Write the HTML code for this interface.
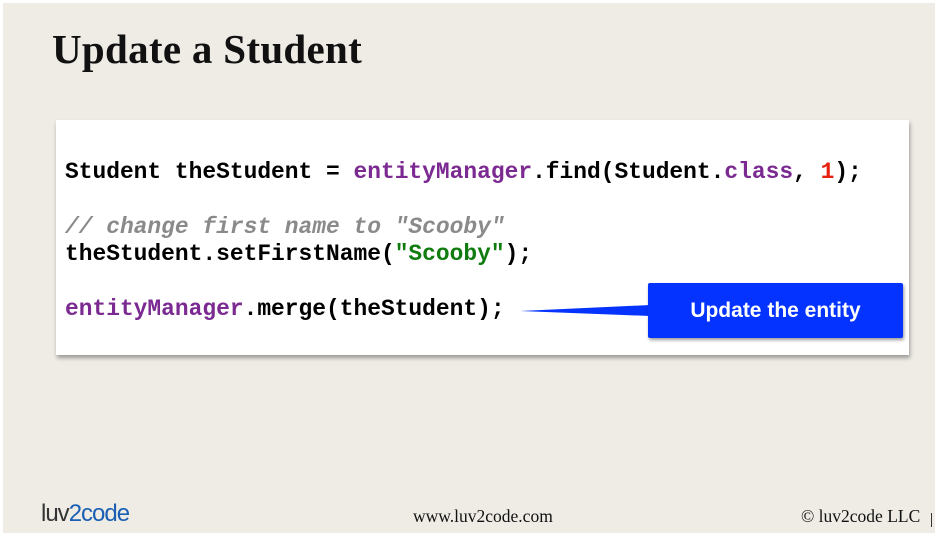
<!DOCTYPE html>
<html><head><style>
html,body{margin:0;padding:0;width:940px;height:538px;background:#fff;overflow:hidden;position:relative}
.bg{position:absolute;left:3px;top:3px;width:932px;height:530px;background:#efece6}
.title{position:absolute;left:52px;top:25px;font:bold 41px "Liberation Serif",serif;color:#111;letter-spacing:0.3px;white-space:nowrap}
.box{position:absolute;left:56px;top:120px;width:853px;height:235px;background:#fff;box-shadow:1px 3px 4px rgba(0,0,0,.35)}
.code{position:absolute;left:65px;font:bold 22.9px "Liberation Mono",monospace;color:#000;white-space:pre}
.p{color:#7b2a91}.c{color:#8a8a8a;font-style:italic}.g{color:#107c10}.r{color:#e8200f}.b{color:#7b2a91}
.call{position:absolute;left:648px;top:283px;width:255px;height:55px;background:#0433ff;border-radius:2px;box-shadow:1px 2px 3px rgba(0,0,0,.4);color:#fff;font:bold 21px "Liberation Sans",sans-serif;text-align:center;line-height:55px}
.foot{position:absolute;top:506px;font:17.5px "Liberation Serif",serif;color:#111}
</style></head><body>
<div class="bg"></div>
<div class="title">Update a Student</div>
<div class="box"></div>
<div class="code" style="top:159px">Student theStudent = <span class="p">entityManager</span>.find(Student.<span class="b">class</span>, <span class="r">1</span>);</div>
<div class="code" style="top:214px"><span class="c">// change first name to "Scooby"</span></div>
<div class="code" style="top:241px">theStudent.setFirstName(<span class="g">"Scooby"</span>);</div>
<div class="code" style="top:296px"><span class="p">entityManager</span>.merge(theStudent);</div>
<svg style="position:absolute;left:0;top:0" width="940" height="538"><polygon points="520,311 650,305 650,316" fill="#0433ff"/></svg>
<div class="call">Update the entity</div>
<div style="position:absolute;left:41px;top:500px;font:24px 'Liberation Sans',sans-serif;color:#333;letter-spacing:-1px">luv<span style="color:#1a5fb4">2</span><span style="color:#1a5fb4">code</span></div>
<div class="foot" style="left:413px">www.luv2code.com</div>
<div class="foot" style="left:801px">© luv2code LLC</div>
<div style="position:absolute;left:931px;top:513px;width:1px;height:14px;background:#333"></div>
</body></html>
